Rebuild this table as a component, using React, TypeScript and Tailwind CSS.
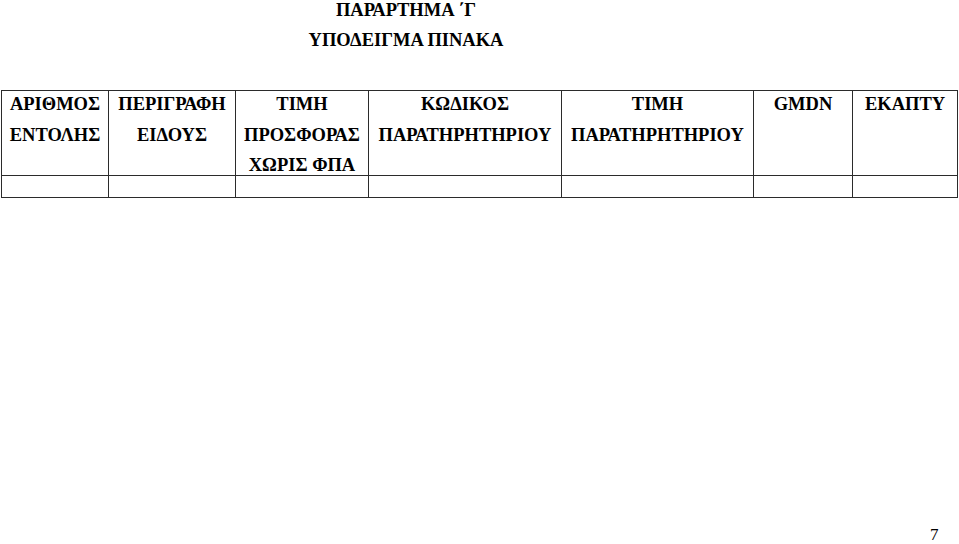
import React from 'react';

const columns = [
  { width: 107, lines: ['ΑΡΙΘΜΟΣ', 'ΕΝΤΟΛΗΣ'] },
  { width: 127, lines: ['ΠΕΡΙΓΡΑΦΗ', 'ΕΙΔΟΥΣ'] },
  { width: 133, lines: ['ΤΙΜΗ', 'ΠΡΟΣΦΟΡΑΣ', 'ΧΩΡΙΣ ΦΠΑ'] },
  { width: 193, lines: ['ΚΩΔΙΚΟΣ', 'ΠΑΡΑΤΗΡΗΤΗΡΙΟΥ'] },
  { width: 192, lines: ['ΤΙΜΗ', 'ΠΑΡΑΤΗΡΗΤΗΡΙΟΥ'] },
  { width: 99, lines: ['GMDN'] },
  { width: 105, lines: ['ΕΚΑΠΤΥ'] },
];

export default function App() {
  return (
    <div
      className="relative h-[544px] w-[959px] overflow-hidden bg-white text-black"
      style={{ fontFamily: '"Liberation Serif", "Times New Roman", serif' }}
    >
      <div className="w-[812px] text-center text-[18.5px] font-bold">
        <div className="leading-[20px]">ΠΑΡΑΡΤΗΜΑ ΄Γ</div>
        <div className="mt-[10px] leading-[20px]">ΥΠΟΔΕΙΓΜΑ ΠΙΝΑΚΑ</div>
      </div>

      <table className="ml-px mt-[40px] table-fixed border-collapse text-[18.5px] font-bold">
        <colgroup>
          {columns.map((c, i) => (
            <col key={i} style={{ width: c.width }} />
          ))}
        </colgroup>
        <tbody>
          <tr className="h-[85px]">
            {columns.map((c, i) => (
              <td key={i} className="border border-[#2b2b2b] p-0 align-top text-center">
                <div className="flex flex-col gap-[12.5px] pt-[4px]">
                  {c.lines.map((l) => (
                    <div key={l} className="whitespace-nowrap leading-[18px]">
                      {l}
                    </div>
                  ))}
                </div>
              </td>
            ))}
          </tr>
          <tr className="h-[22px]">
            {columns.map((_, i) => (
              <td key={i} className="border border-[#2b2b2b] p-0" />
            ))}
          </tr>
        </tbody>
      </table>

      <div className="absolute left-[930px] top-[526px] text-[17px] leading-[17px]">7</div>
    </div>
  );
}
